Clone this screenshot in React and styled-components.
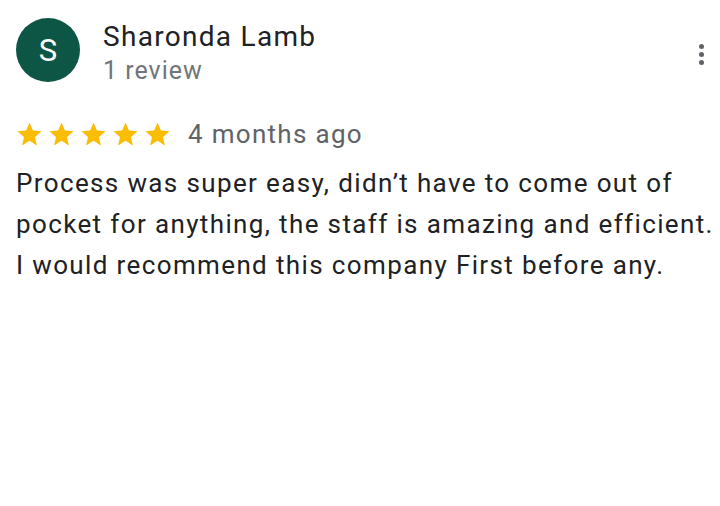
import React from 'react';
import styled, { createGlobalStyle } from 'styled-components';

const Global = createGlobalStyle`
  body {
    margin: 0;
    background: #fff;
    font-family: Roboto, "Noto Sans", Arial, sans-serif;
  }
`;

const Card = styled.div`
  width: 720px;
  height: 506px;
  padding: 18px 16px 0 16px;
  box-sizing: border-box;
`;

const Header = styled.div`
  display: flex;
  align-items: flex-start;
`;

const Avatar = styled.div`
  width: 64px;
  height: 64px;
  border-radius: 50%;
  background: #0d5646;
  color: #fff;
  font-size: 31px;
  display: flex;
  align-items: center;
  justify-content: center;
  flex-shrink: 0;
`;

const Who = styled.div`
  margin-left: 23px;
  flex: 1;
  padding-top: 1px;
`;

const Name = styled.div`
  font-size: 28px;
  letter-spacing: 1.3px;
  color: #202124;
  line-height: 36px;
`;

const Sub = styled.div`
  font-size: 25px;
  letter-spacing: 1px;
  color: #70757a;
  line-height: 32px;
`;

const Menu = styled.button`
  border: 0;
  background: none;
  padding: 0;
  margin-top: 26px;
  margin-right: -2px;
  width: 10px;
  display: flex;
  flex-direction: column;
  align-items: center;
  gap: 3px;
  span {
    width: 5px;
    height: 5px;
    border-radius: 50%;
    background: #5f6368;
  }
`;

const RatingRow = styled.div`
  display: flex;
  align-items: center;
  margin-top: 31px;
`;

const Stars = styled.div`
  display: flex;
  gap: 3px;
  margin-left: -1px;
  margin-right: 16px;
`;

const Ago = styled.span`
  font-size: 26px;
  letter-spacing: 1.3px;
  color: #5f6368;
  line-height: 32px;
`;

const Body = styled.p`
  margin: 13px -12px 0 0;
  font-size: 26px;
  letter-spacing: 1.37px;
  line-height: 41px;
  color: #202124;
`;

const Star = () => (
  <svg width="29" height="29" viewBox="0 0 24 24">
    <path fill="#fbbc04" d="M12 17.27 18.18 21l-1.64-7.03L22 9.24l-7.19-.61L12 2 9.19 8.63 2 9.24l5.46 4.73L5.82 21z" />
  </svg>
);

export default function App() {
  return (
    <Card>
      <Global />
      <Header>
        <Avatar>S</Avatar>
        <Who>
          <Name>Sharonda Lamb</Name>
          <Sub>1 review</Sub>
        </Who>
        <Menu aria-label="More">
          <span /><span /><span />
        </Menu>
      </Header>
      <RatingRow>
        <Stars>
          {[0, 1, 2, 3, 4].map((i) => <Star key={i} />)}
        </Stars>
        <Ago>4 months ago</Ago>
      </RatingRow>
      <Body>
        Process was super easy, didn’t have to come out of pocket for anything, the staff is amazing and efficient. I would recommend this company First before any.
      </Body>
    </Card>
  );
}
